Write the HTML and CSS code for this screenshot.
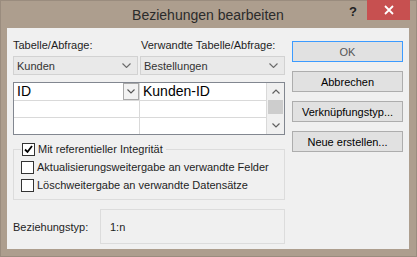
FILE: index.html
```html
<!DOCTYPE html>
<html lang="de">
<head>
  <meta charset="UTF-8">
  <title>Beziehungen bearbeiten</title>
  <link rel="stylesheet" href="styles.css">
</head>
<body>
  <div class="dlg">
    <div class="dlg-titlebar">
      <div class="dlg-title">Beziehungen bearbeiten</div>
      <div class="dlg-help">?</div>
      <div class="dlg-close">
        <svg width="10" height="10" viewBox="0 0 10 10"><path d="M1 1L9 9M9 1L1 9" stroke="#fff" stroke-width="1.8"/></svg>
      </div>
    </div>
    <div class="dlg-client">
      <div class="dlg-main">
        <!-- Tabellen -->
        <div class="dlg-labels">
          <span class="dlg-label-left">Tabelle/Abfrage:</span>
          <span>Verwandte Tabelle/Abfrage:</span>
        </div>
        <div class="dlg-combos">
          <div class="combo combo-left">
            <span>Kunden</span>
            <svg class="chev" width="9" height="5" viewBox="0 0 9 5"><path d="M0.5 0.5L4.5 4.5L8.5 0.5" fill="none" stroke="#6a6a6a" stroke-width="1.1"/></svg>
          </div>
          <div class="combo combo-right">
            <span>Bestellungen</span>
            <svg class="chev" width="9" height="5" viewBox="0 0 9 5"><path d="M0.5 0.5L4.5 4.5L8.5 0.5" fill="none" stroke="#6a6a6a" stroke-width="1.1"/></svg>
          </div>
        </div>
        <!-- Felder -->
        <div class="fields">
          <div class="fields-cells">
            <div class="cell cell-active">
              <span>ID</span>
              <div class="cell-drop">
                <svg width="8" height="5" viewBox="0 0 8 5"><path d="M0.5 0.5L4 4L7.5 0.5" fill="none" stroke="#555" stroke-width="1.1"/></svg>
              </div>
            </div>
            <div class="cell"><span>Kunden-ID</span></div>
            <div class="cell"></div>
            <div class="cell"></div>
            <div class="cell"></div>
            <div class="cell"></div>
          </div>
          <div class="vscroll">
            <div class="vscroll-btn">
              <svg width="8" height="5" viewBox="0 0 8 5"><path d="M0.5 4.5L4 1L7.5 4.5" fill="none" stroke="#606060" stroke-width="1.2"/></svg>
            </div>
            <div class="vscroll-thumb"></div>
            <div class="vscroll-track"></div>
            <div class="vscroll-btn">
              <svg width="8" height="5" viewBox="0 0 8 5"><path d="M0.5 0.5L4 4L7.5 0.5" fill="none" stroke="#606060" stroke-width="1.2"/></svg>
            </div>
          </div>
        </div>
        <!-- Optionen -->
        <fieldset class="opts">
          <legend class="opt">
            <span class="chk">
              <svg width="11" height="11" viewBox="0 0 11 11"><path d="M2 5.5L4.5 8L9 2" fill="none" stroke="#000" stroke-width="1.8"/></svg>
            </span>
            <span>Mit referentieller Integrität</span>
          </legend>
          <div class="opt"><span class="chk"></span><span>Aktualisierungsweitergabe an verwandte Felder</span></div>
          <div class="opt"><span class="chk"></span><span>Löschweitergabe an verwandte Datensätze</span></div>
        </fieldset>
        <div class="reltype">
          <span class="reltype-label">Beziehungstyp:</span>
          <div class="reltype-box">1:n</div>
        </div>
      </div>
      <div class="dlg-buttons">
        <button class="btn btn-default">OK</button>
        <button class="btn">Abbrechen</button>
        <button class="btn">Verknüpfungstyp...</button>
        <button class="btn">Neue erstellen...</button>
      </div>
    </div>
  </div>
</body>
</html>
```

FILE: styles.css
```css
body { margin: 0; background: #ad9e8e; }
.dlg {
  width: 417px;
  height: 257px;
  box-sizing: border-box;
  background: #ad9e8e;
  border: 1px solid #9a8c7e;
  padding: 0 7px 7px 6px;
  display: flex;
  flex-direction: column;
  font-family: 'Liberation Sans', Arial, sans-serif;
  font-size: 11px;
  color: #000;
}
.dlg-titlebar {
  height: 27px;
  position: relative;
  display: flex;
  align-items: center;
  justify-content: center;
}
.dlg-title {
  font-size: 14px;
  color: #2b2b2b;
  margin-top: 1px;
}
.dlg-help {
  position: absolute;
  right: 52px;
  top: 3px;
  font-size: 13px;
  font-weight: 700;
  color: #222;
}
.dlg-close {
  position: absolute;
  right: -1px;
  top: -1px;
  width: 43px;
  height: 20px;
  background: #c75050;
  display: flex;
  align-items: center;
  justify-content: center;
}
.dlg-client {
  flex: 1;
  background: #f0f0f0;
  display: flex;
  padding: 0 6px 0 6px;
  gap: 7px;
}
.dlg-main {
  width: 272px;
  padding-top: 9px;
}
.dlg-labels {
  display: flex;
  height: 16px;
  line-height: 16px;
  color: #1e1e1e;
}
.dlg-label-left { width: 128px; }
.dlg-combos {
  display: flex;
  gap: 2px;
  margin-top: 3px;
}
.combo {
  height: 19px;
  box-sizing: border-box;
  border: 1px solid #d2d2d2;
  background: #e9e9e9;
  display: flex;
  align-items: center;
  justify-content: space-between;
  padding: 0 6px 0 3px;
  color: #333;
}
.combo-left { width: 125px; }
.combo-right { width: 145px; }
.fields {
  margin-top: 7px;
  border: 1px solid #828790;
  display: flex;
  background: #fff;
}
.fields-cells {
  display: grid;
  grid-template-columns: 125px 126px;
  grid-template-rows: 17px 16px 16px;
  gap: 1px;
  background: #d9d9d9;
}
.cell {
  background: #fff;
  display: flex;
  align-items: center;
  justify-content: space-between;
  padding-left: 3px;
  font-size: 14px;
  line-height: 17px;
}
.cell-drop {
  width: 16px;
  height: 17px;
  box-sizing: border-box;
  border: 1px solid #a9a9a9;
  background: #f2f2f2;
  display: flex;
  align-items: center;
  justify-content: center;
}
.vscroll {
  width: 17px;
  border-left: 1px solid #d9d9d9;
  background: #f0f0f0;
  display: flex;
  flex-direction: column;
}
.vscroll-btn {
  height: 17px;
  display: flex;
  align-items: center;
  justify-content: center;
}
.vscroll-thumb {
  height: 14px;
  margin: 0 1px;
  background: #cdcdcd;
}
.vscroll-track { flex: 1; }
.opts {
  margin: 7px 0 0 0;
  padding: 2px 0 5px 7px;
  border: 1px solid #dcdcdc;
}
.opts legend {
  padding: 0 3px 0 1px;
}
.opt {
  display: flex;
  align-items: center;
  gap: 3px;
  height: 18px;
  color: #1e1e1e;
}
.opts legend.opt { height: 14px; }
.chk {
  width: 13px;
  height: 13px;
  box-sizing: border-box;
  border: 1px solid #333;
  background: #fff;
  display: flex;
  align-items: center;
  justify-content: center;
}
.reltype {
  display: flex;
  align-items: center;
  margin-top: 9px;
}
.reltype-label {
  width: 87px;
  color: #1e1e1e;
}
.reltype-box {
  flex: 1;
  height: 35px;
  box-sizing: border-box;
  border: 1px solid #dcdcdc;
  padding-left: 9px;
  display: flex;
  align-items: center;
  color: #1e1e1e;
}
.dlg-buttons {
  width: 111px;
  padding-top: 13px;
  display: flex;
  flex-direction: column;
  gap: 9px;
}
.btn {
  height: 21px;
  box-sizing: border-box;
  border: 1px solid #adadad;
  background: #e1e1e1;
  font-family: inherit;
  font-size: 11px;
  color: #000;
  padding: 0;
  margin: 0;
}
.btn-default {
  border-color: #3c9bff;
  color: #555;
}
```
